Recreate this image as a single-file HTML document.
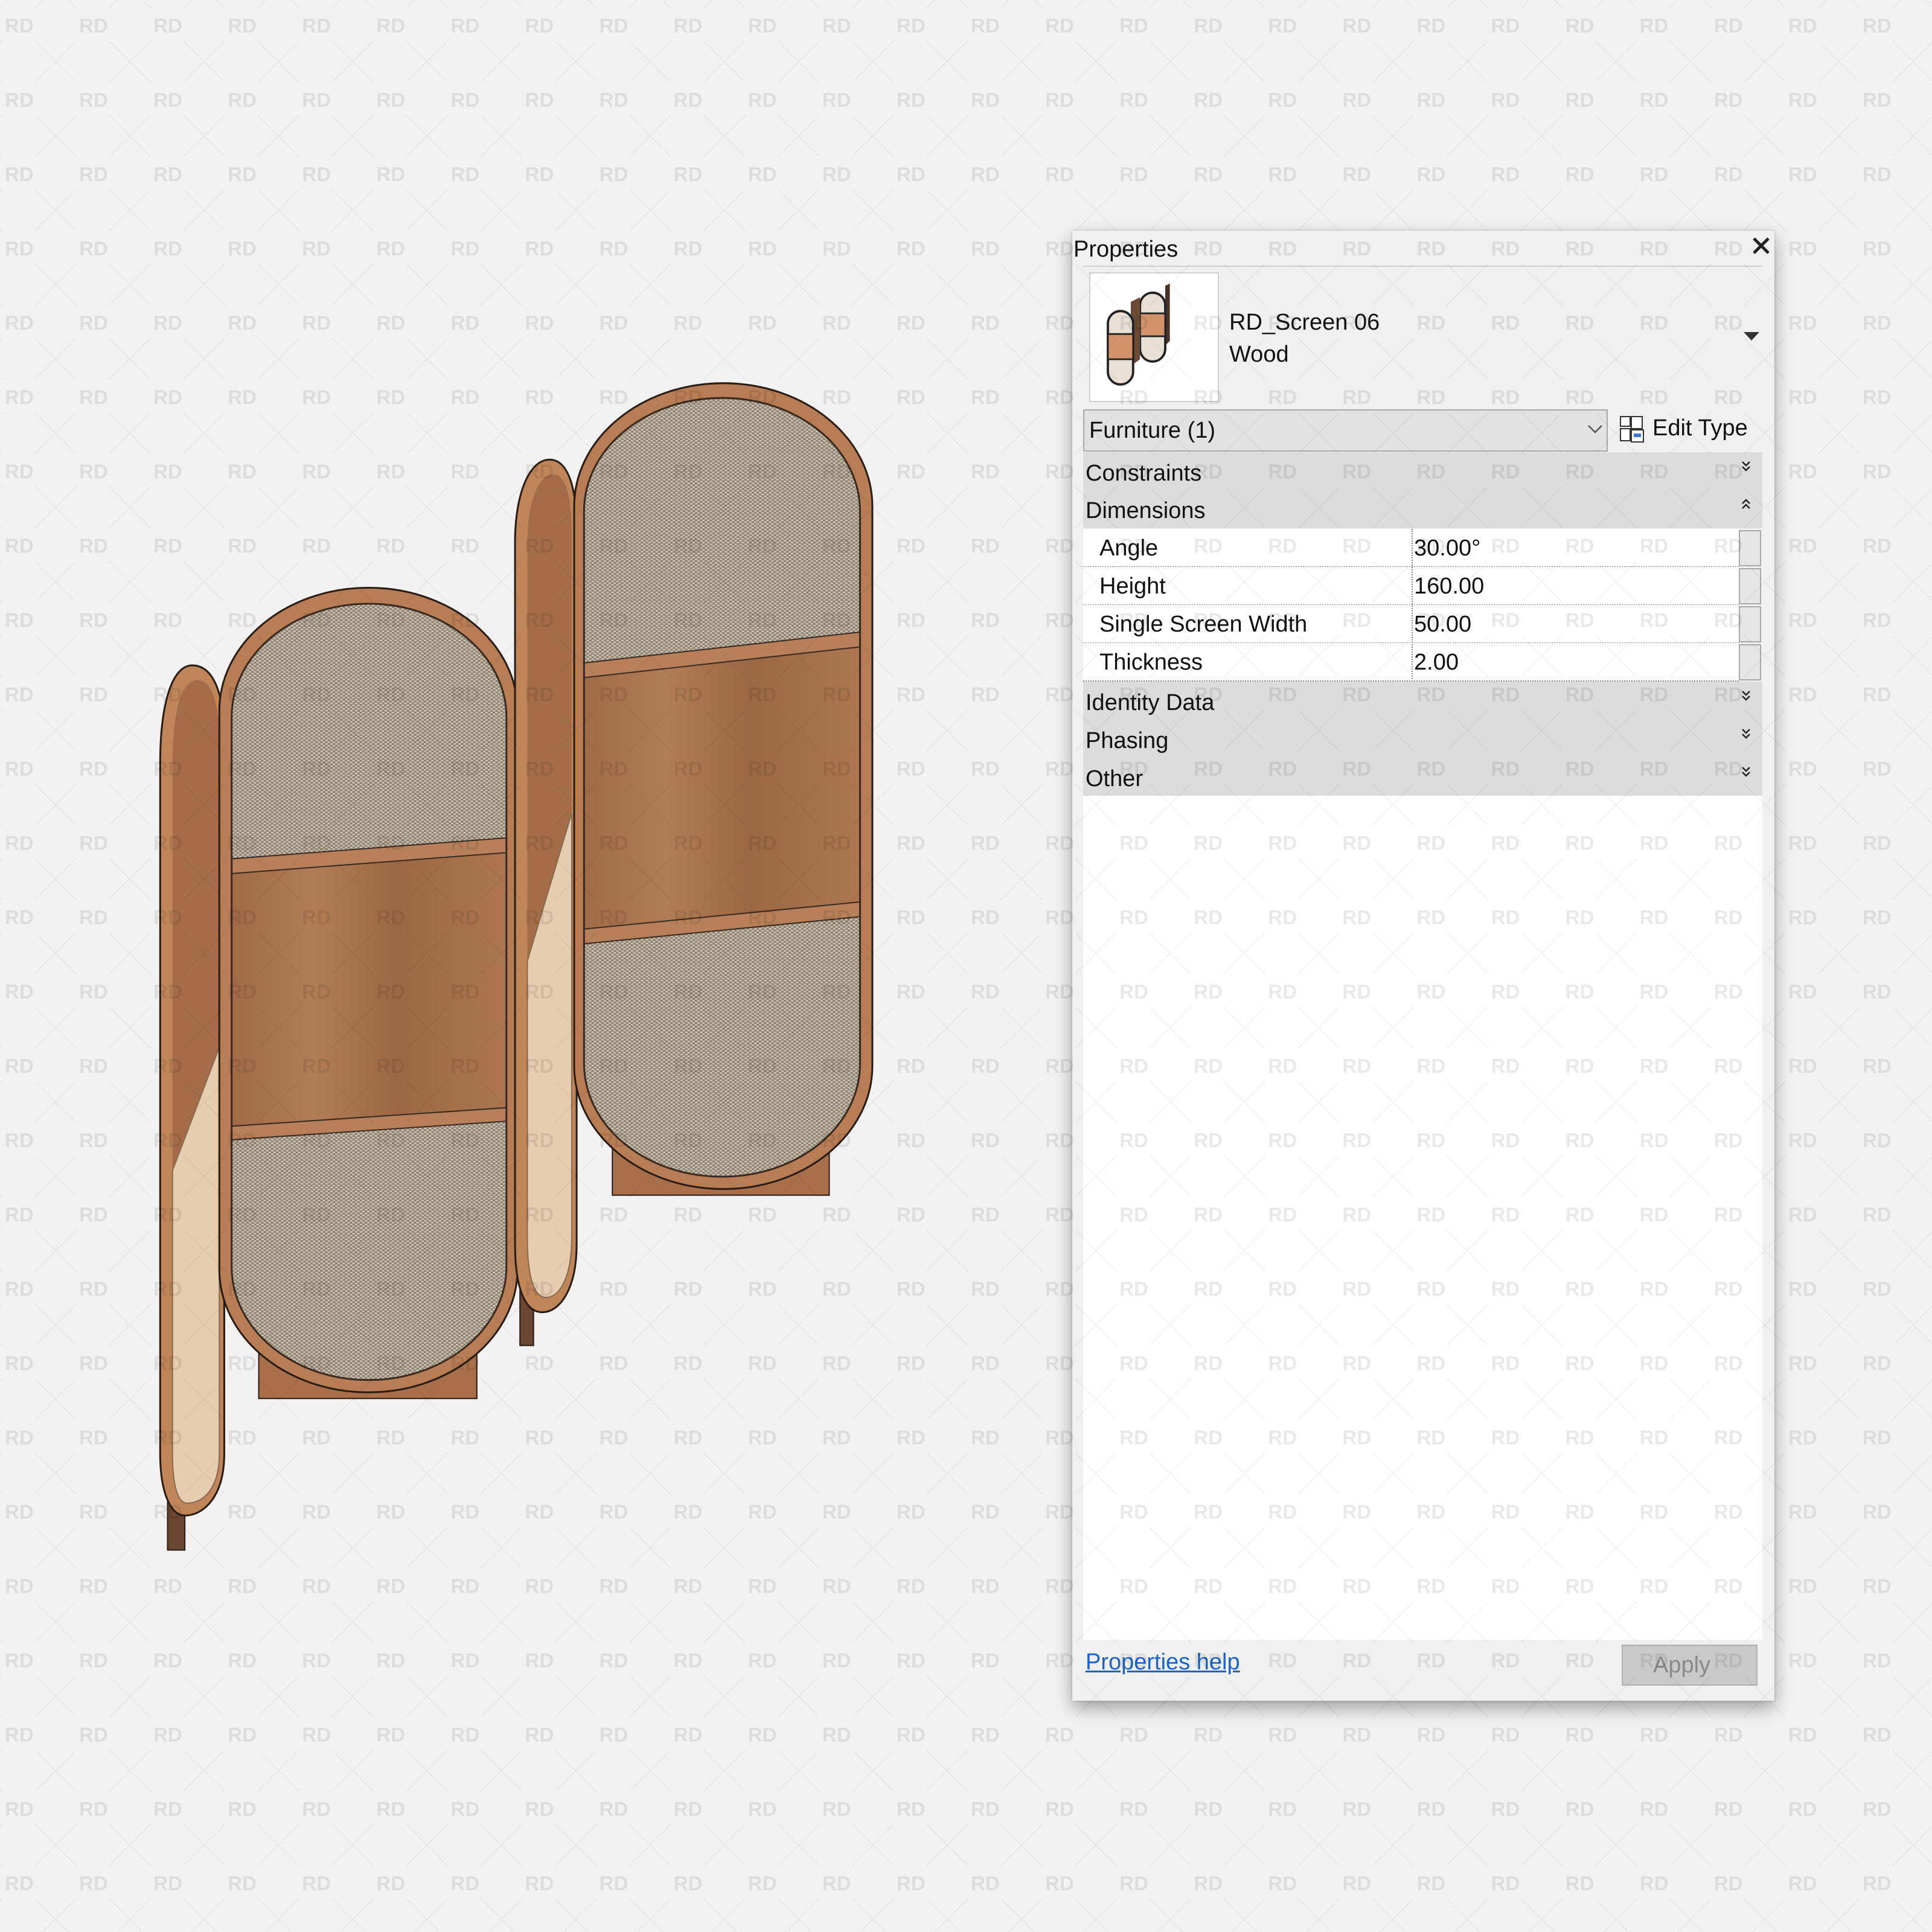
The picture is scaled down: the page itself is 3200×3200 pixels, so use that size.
<!DOCTYPE html>
<html><head><meta charset="utf-8">
<style>
html,body{margin:0;padding:0}
body{width:3200px;height:3200px;background:#f2f2f2;position:relative;overflow:hidden;font-family:"Liberation Sans",sans-serif;}
.abs{position:absolute}
#panel{left:1776px;top:382px;width:1163px;height:2435px;background:#f0f0f0;box-shadow:0 12px 28px rgba(0,0,0,.35),0 0 3px rgba(0,0,0,.25);}
.t{position:absolute;font-size:38px;color:#111;white-space:nowrap;line-height:1}
.sec{position:absolute;left:18px;width:1125px;height:63px;background:#dcdcdc}
.row{position:absolute;left:18px;width:1086px;height:62px;background:#fff;border-bottom:2px dotted #888}
.sb{position:absolute;left:1104px;width:33px;height:56px;border:2px solid #a8a8a8;background:#e6e6e6}
</style></head><body>

<svg class="abs" style="left:0;top:0" width="3200" height="3200" viewBox="0 0 1568 1568">
<defs>
<pattern id="cane" width="4" height="3" patternUnits="userSpaceOnUse">
<rect width="4" height="3" fill="#8c8273"/>
<ellipse cx="1" cy="0.8" rx="1.3" ry="0.7" fill="#cfc5b4"/>
<ellipse cx="3" cy="2.3" rx="1.3" ry="0.7" fill="#cfc5b4"/>
</pattern>
<linearGradient id="wood" x1="0" x2="1" y1="0" y2="0">
<stop offset="0" stop-color="#a06a47"/><stop offset=".3" stop-color="#b27c56"/><stop offset=".6" stop-color="#9c6744"/><stop offset="1" stop-color="#ad7650"/>
</linearGradient>
<clipPath id="inB"><path d="M188,582 C188,531 238,490 299,490 C360,490 411,531 411,582 V1028 C411,1079 360,1120 299,1120 C238,1120 188,1079 188,1028Z"/></clipPath>
<clipPath id="inD"><path d="M474,415 C474,364 524,323 586,323 C648,323 698,364 698,415 V863 C698,914 648,955 586,955 C524,955 474,914 474,863Z"/></clipPath>
</defs>
<!-- Panel A thin -->
<rect x="136" y="1200" width="14" height="58" fill="#6b4630" stroke="#2a1d15" stroke-width="1"/>
<path d="M156,540 C172,540 182,560 182,600 L182,1180 C182,1215 165,1230 150,1230 C138,1230 130,1210 130,1180 L130,620 C130,570 140,540 156,540Z" fill="#c08659" stroke="#2a1d15" stroke-width="1.5"/>
<path d="M160,552 C172,552 178,570 178,605 L178,850 L140,950 L140,620 C140,575 148,552 160,552Z" fill="#a46c48"/>
<path d="M178,850 L178,1180 C178,1208 165,1220 152,1220 C144,1220 140,1205 140,1180 L140,950Z" fill="#e5cdb0" stroke="#8a6a50" stroke-width="1"/>
<!-- Panel B base -->
<rect x="210" y="1095" width="177" height="40" fill="#a86f4a" stroke="#2a1d15" stroke-width="1"/>
<path d="M178,577 C178,522 232,477 299,477 C366,477 420,522 420,577 V1030 C420,1085 366,1130 299,1130 C232,1130 178,1085 178,1030Z" fill="#b87d54" stroke="#2a1d15" stroke-width="1.5"/>
<g clip-path="url(#inB)">
<rect x="180" y="480" width="240" height="650" fill="url(#cane)"/>
<polygon points="188,705 411,688 411,903 188,918" fill="url(#wood)"/>
<polygon points="188,697 411,680 411,692 188,709" fill="#b8805a" stroke="#3a2a20" stroke-width="1"/>
<polygon points="188,914 411,899 411,910 188,925" fill="#b8805a" stroke="#3a2a20" stroke-width="1"/>
</g>
<path d="M188,582 C188,531 238,490 299,490 C360,490 411,531 411,582 V1028 C411,1079 360,1120 299,1120 C238,1120 188,1079 188,1028Z" fill="none" stroke="#3a2a20" stroke-width="1.5"/>
<!-- Panel C thin -->
<rect x="422" y="1040" width="11" height="52" fill="#6b4630" stroke="#2a1d15" stroke-width="1"/>
<path d="M446,373 C460,373 468,393 468,430 L468,1010 C468,1045 455,1065 440,1065 C426,1065 418,1045 418,1010 L418,440 C418,400 430,373 446,373Z" fill="#c08659" stroke="#2a1d15" stroke-width="1.5"/>
<path d="M449,385 C460,385 464,405 464,435 L464,660 L428,780 L428,440 C428,405 438,385 449,385Z" fill="#a46c48"/>
<path d="M464,660 L464,1005 C464,1035 455,1053 443,1053 C433,1053 428,1035 428,1005 L428,780Z" fill="#e5cdb0" stroke="#8a6a50" stroke-width="1"/>
<!-- Panel D -->
<rect x="497" y="925" width="176" height="45" fill="#a86f4a" stroke="#2a1d15" stroke-width="1"/>
<path d="M466,411 C466,356 520,311 587,311 C654,311 708,356 708,411 V865 C708,920 654,965 587,965 C520,965 466,920 466,865Z" fill="#b87d54" stroke="#2a1d15" stroke-width="1.5"/>
<g clip-path="url(#inD)">
<rect x="470" y="315" width="235" height="650" fill="url(#cane)"/>
<polygon points="474,545 698,520 698,738 474,760" fill="url(#wood)"/>
<polygon points="474,538 698,513 698,525 474,550" fill="#b8805a" stroke="#3a2a20" stroke-width="1"/>
<polygon points="474,754 698,732 698,744 474,766" fill="#b8805a" stroke="#3a2a20" stroke-width="1"/>
</g>
<path d="M474,415 C474,364 524,323 586,323 C648,323 698,364 698,415 V863 C698,914 648,955 586,955 C524,955 474,914 474,863Z" fill="none" stroke="#3a2a20" stroke-width="1.5"/>
</svg>

<div id="panel" class="abs">
  <div class="t" style="left:2px;top:12px">Properties</div>
  <svg class="abs" style="left:1627px;left:1126px;top:10px" width="30" height="30" viewBox="0 0 30 30"><path d="M3,3 L27,27 M27,3 L3,27" stroke="#222" stroke-width="5"/></svg>
  <div class="abs" style="left:18px;top:58px;width:1125px;height:2px;background:#cfcfcf"></div>
  <div class="abs" style="left:28px;top:69px;width:211px;height:211px;background:#fff;border:2px solid #d0d0d0"></div>
  <svg class="abs" style="left:40px;top:80px" width="190" height="190" viewBox="0 0 100 100">
    <path d="M60,6 L64,4 L64,54 L60,58Z" fill="#4a3326"/>
    <rect x="38" y="12" width="22" height="60" rx="11" fill="#e8e0d4" stroke="#222" stroke-width="2"/>
    <rect x="38" y="30" width="22" height="20" fill="#d2926a" stroke="#222" stroke-width="1.5"/>
    <path d="M30,20 L38,16 L38,70 L30,76Z" fill="#6a4a36"/>
    <rect x="10" y="28" width="22" height="64" rx="11" fill="#e8e0d4" stroke="#222" stroke-width="2"/>
    <rect x="10" y="48" width="22" height="22" fill="#d2926a" stroke="#222" stroke-width="1.5"/>
  </svg>
  <div class="t" style="left:260px;top:133px">RD_Screen 06</div>
  <div class="t" style="left:260px;top:186px">Wood</div>
  <svg class="abs" style="left:1112px;top:168px" width="26" height="16"><path d="M0,0 L26,0 L13,14Z" fill="#333"/></svg>
  <div class="abs" style="left:18px;top:296px;width:865px;height:66px;background:#e2e2e2;border:2px solid #a8a8a8"></div>
  <div class="t" style="left:28px;top:312px">Furniture (1)</div>
  <svg class="abs" style="left:853px;top:320px" width="26" height="18"><path d="M2,3 L13,14 L24,3" fill="none" stroke="#555" stroke-width="2.5"/></svg>
  <svg class="abs" style="left:906px;top:306px" width="44" height="46" viewBox="0 0 22 23"><rect x="1" y="1" width="8" height="8" fill="#fff" stroke="#333"/><rect x="10" y="1" width="9" height="10" fill="#fff" stroke="#333"/><rect x="1" y="11" width="8" height="10" fill="#fff" stroke="#333"/><rect x="10" y="12" width="10" height="10" fill="#fff" stroke="#333"/><rect x="12" y="15" width="6" height="3" fill="#3a7ad0"/></svg>
  <div class="t" style="left:961px;top:308px">Edit Type</div>

  <div class="sec" style="top:367px"></div><div class="t" style="left:22px;top:383px">Constraints</div>
  <div class="sec" style="top:430px"></div><div class="t" style="left:22px;top:445px">Dimensions</div>
  <div class="row" style="top:494px"></div><div class="t" style="left:45px;top:507px">Angle</div><div class="t" style="left:566px;top:507px">30.00°</div><div class="sb" style="top:496px"></div>
  <div class="row" style="top:557px"></div><div class="t" style="left:45px;top:570px">Height</div><div class="t" style="left:566px;top:570px">160.00</div><div class="sb" style="top:559px"></div>
  <div class="row" style="top:620px"></div><div class="t" style="left:45px;top:633px">Single Screen Width</div><div class="t" style="left:566px;top:633px">50.00</div><div class="sb" style="top:622px"></div>
  <div class="row" style="top:683px"></div><div class="t" style="left:45px;top:696px">Thickness</div><div class="t" style="left:566px;top:696px">2.00</div><div class="sb" style="top:685px"></div>
  <div class="abs" style="left:562px;top:494px;width:0;height:253px;border-left:2px dotted #888"></div>
  <div class="sec" style="top:747px"></div><div class="t" style="left:22px;top:763px">Identity Data</div>
  <div class="sec" style="top:810px"></div><div class="t" style="left:22px;top:826px">Phasing</div>
  <div class="sec" style="top:873px;height:63px"></div><div class="t" style="left:22px;top:889px">Other</div>
  <svg class="abs" style="left:1108px;top:380px" width="16" height="28"><path d="M2,3 L8,9 L14,3 M2,11 L8,17 L14,11" fill="none" stroke="#222" stroke-width="2.5"/></svg>
  <svg class="abs" style="left:1108px;top:443px" width="16" height="28"><path d="M2,9 L8,3 L14,9 M2,17 L8,11 L14,17" fill="none" stroke="#222" stroke-width="2.5"/></svg>
  <svg class="abs" style="left:1108px;top:760px" width="16" height="28"><path d="M2,3 L8,9 L14,3 M2,11 L8,17 L14,11" fill="none" stroke="#222" stroke-width="2.5"/></svg>
  <svg class="abs" style="left:1108px;top:823px" width="16" height="28"><path d="M2,3 L8,9 L14,3 M2,11 L8,17 L14,11" fill="none" stroke="#222" stroke-width="2.5"/></svg>
  <svg class="abs" style="left:1108px;top:886px" width="16" height="28"><path d="M2,3 L8,9 L14,3 M2,11 L8,17 L14,11" fill="none" stroke="#222" stroke-width="2.5"/></svg>
  <div class="abs" style="left:18px;top:936px;width:1125px;height:1398px;background:#fff"></div>
  <div class="t" style="left:22px;top:2352px;color:#1a63c8;text-decoration:underline">Properties help</div>
  <div class="abs" style="left:910px;top:2342px;width:221px;height:64px;background:#c9c9c9;border:2px solid #b0b0b0"></div>
  <div class="t" style="left:962px;top:2357px;color:#8a8a8a">Apply</div>
</div>

<svg class="abs" style="left:0;top:0;pointer-events:none" width="3200" height="3200">
<defs>
<pattern id="wm" x="0" y="0" width="123.08" height="123.08" patternUnits="userSpaceOnUse">
<text x="8" y="54" font-family="Liberation Sans, sans-serif" font-weight="bold" font-size="33" fill="rgba(0,0,0,0.085)">RD</text>
<path d="M58,68 L126,136 M126,68 L58,136" stroke="rgba(0,0,0,0.05)" stroke-width="1.5"/>
<path d="M58,-55 L126,13 M126,-55 L58,13" stroke="rgba(0,0,0,0.05)" stroke-width="1.5"/>
<path d="M-65,68 L3,136 M3,68 L-65,136" stroke="rgba(0,0,0,0.05)" stroke-width="1.5"/>
<path d="M-65,-55 L3,13 M3,-55 L-65,13" stroke="rgba(0,0,0,0.05)" stroke-width="1.5"/>
</pattern>
</defs>
<rect width="3200" height="3200" fill="url(#wm)"/>
</svg>
</body></html>
